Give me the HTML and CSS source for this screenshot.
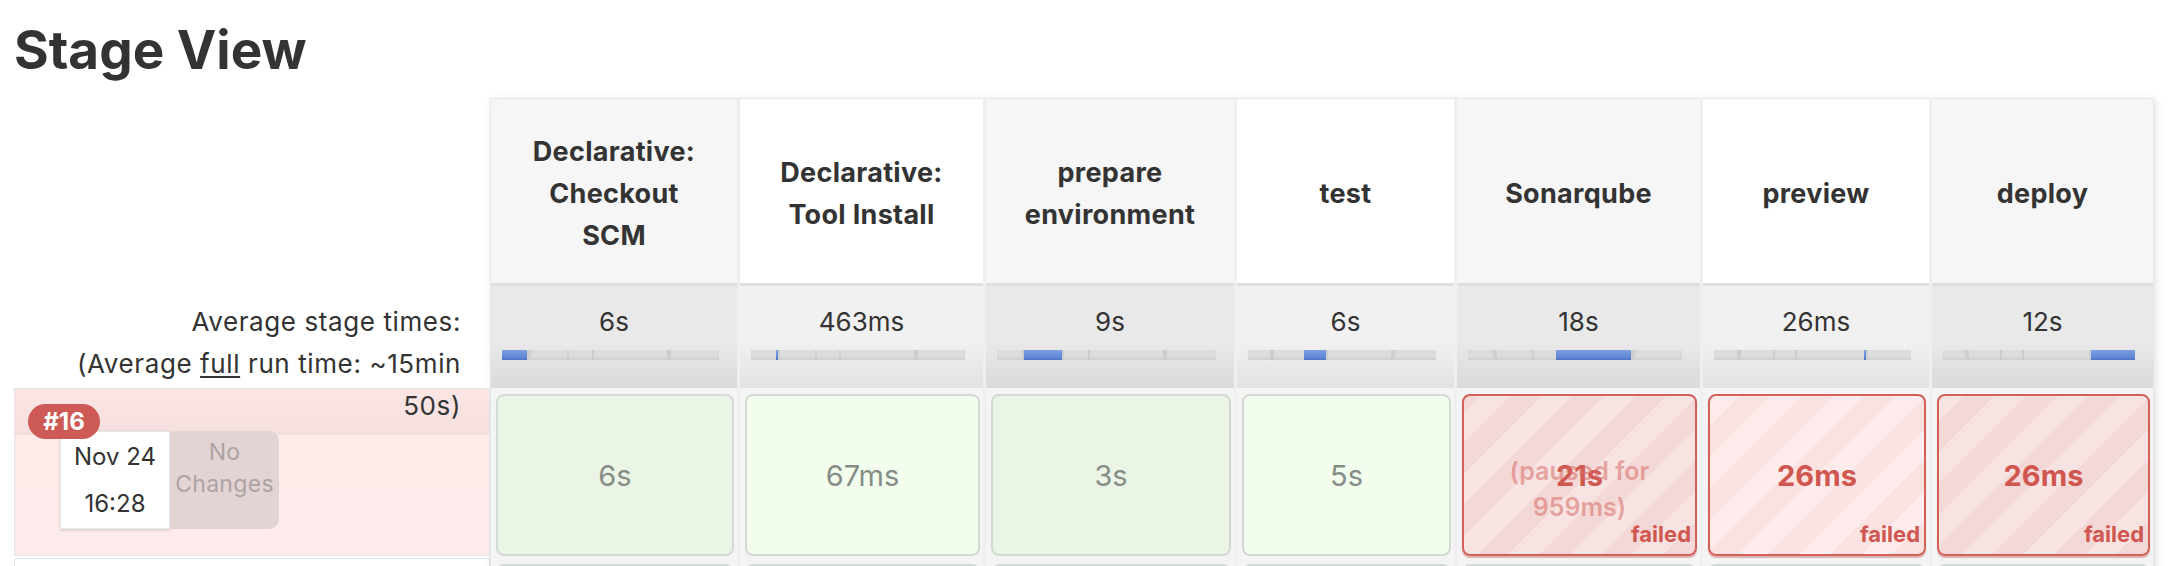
FILE: index.html
```html
<!DOCTYPE html>
<html>
<head>
<meta charset="utf-8">
<title>Stage View</title>
<link rel="stylesheet" href="styles.css">
</head>
<body>
<h2 class="title">Stage View</h2>
<div class="stage-view">
  <div class="labels">
    <div class="label-head"></div>
    <div class="label-avg">Average stage times:<br>(Average <u>full</u> run time: ~15min 50s)</div>
    <div class="build-row failed-row">
      <span class="badge">#16</span>
      <div class="build-meta">
        <div class="date"><div>Nov 24</div><div>16:28</div></div>
        <div class="changes">No Changes</div>
      </div>
    </div>
    <div class="build-row next-row"></div>
  </div>

  <div class="table">
    <div class="col">
      <div class="head">Declarative: Checkout SCM</div>
      <div class="avg"><div class="time">6s</div>
        <div class="bar"><span class="seg on" style="width:11.65%"></span><span class="seg" style="width:0.9%"></span><span class="seg" style="width:17.48%"></span><span class="seg" style="width:11.65%"></span><span class="seg" style="width:34.96%"></span><span class="seg" style="width:0.05%"></span><span class="seg" style="width:23.31%"></span></div>
      </div>
      <div class="cell-wrap"><div class="cell ok">6s</div></div>
      <div class="cell-wrap"><div class="cell ok"></div></div>
    </div>
    <div class="col">
      <div class="head">Declarative: Tool Install</div>
      <div class="avg"><div class="time">463ms</div>
        <div class="bar"><span class="seg" style="width:11.65%"></span><span class="seg on" style="width:0.9%"></span><span class="seg" style="width:17.48%"></span><span class="seg" style="width:11.65%"></span><span class="seg" style="width:34.96%"></span><span class="seg" style="width:0.05%"></span><span class="seg" style="width:23.31%"></span></div>
      </div>
      <div class="cell-wrap"><div class="cell ok">67ms</div></div>
      <div class="cell-wrap"><div class="cell ok"></div></div>
    </div>
    <div class="col">
      <div class="head">prepare environment</div>
      <div class="avg"><div class="time">9s</div>
        <div class="bar"><span class="seg" style="width:11.65%"></span><span class="seg" style="width:0.9%"></span><span class="seg on" style="width:17.48%"></span><span class="seg" style="width:11.65%"></span><span class="seg" style="width:34.96%"></span><span class="seg" style="width:0.05%"></span><span class="seg" style="width:23.31%"></span></div>
      </div>
      <div class="cell-wrap"><div class="cell ok">3s</div></div>
      <div class="cell-wrap"><div class="cell ok"></div></div>
    </div>
    <div class="col">
      <div class="head">test</div>
      <div class="avg"><div class="time">6s</div>
        <div class="bar"><span class="seg" style="width:11.65%"></span><span class="seg" style="width:0.9%"></span><span class="seg" style="width:17.48%"></span><span class="seg on" style="width:11.65%"></span><span class="seg" style="width:34.96%"></span><span class="seg" style="width:0.05%"></span><span class="seg" style="width:23.31%"></span></div>
      </div>
      <div class="cell-wrap"><div class="cell ok">5s</div></div>
      <div class="cell-wrap"><div class="cell ok"></div></div>
    </div>
    <div class="col">
      <div class="head">Sonarqube</div>
      <div class="avg"><div class="time">18s</div>
        <div class="bar"><span class="seg" style="width:11.65%"></span><span class="seg" style="width:0.9%"></span><span class="seg" style="width:17.48%"></span><span class="seg" style="width:11.65%"></span><span class="seg on" style="width:34.96%"></span><span class="seg" style="width:0.05%"></span><span class="seg" style="width:23.31%"></span></div>
      </div>
      <div class="cell-wrap"><div class="cell failed"><span class="dur">21s</span><span class="paused">(paused for 959ms)</span><span class="status">failed</span></div></div>
      <div class="cell-wrap"><div class="cell ok"></div></div>
    </div>
    <div class="col">
      <div class="head">preview</div>
      <div class="avg"><div class="time">26ms</div>
        <div class="bar"><span class="seg" style="width:11.65%"></span><span class="seg" style="width:0.9%"></span><span class="seg" style="width:17.48%"></span><span class="seg" style="width:11.65%"></span><span class="seg" style="width:34.96%"></span><span class="seg on" style="width:0.05%"></span><span class="seg" style="width:23.31%"></span></div>
      </div>
      <div class="cell-wrap"><div class="cell failed"><span class="dur">26ms</span><span class="status">failed</span></div></div>
      <div class="cell-wrap"><div class="cell ok"></div></div>
    </div>
    <div class="col">
      <div class="head">deploy</div>
      <div class="avg"><div class="time">12s</div>
        <div class="bar"><span class="seg" style="width:11.65%"></span><span class="seg" style="width:0.9%"></span><span class="seg" style="width:17.48%"></span><span class="seg" style="width:11.65%"></span><span class="seg" style="width:34.96%"></span><span class="seg" style="width:0.05%"></span><span class="seg on" style="width:23.31%"></span></div>
      </div>
      <div class="cell-wrap"><div class="cell failed"><span class="dur">26ms</span><span class="status">failed</span></div></div>
      <div class="cell-wrap"><div class="cell ok"></div></div>
    </div>
  </div>
</div>
</body>
</html>
```

FILE: styles.css
```css
* { box-sizing: border-box; }
html, body { margin: 0; padding: 0; }
body {
  font-family: Inter, "Noto Sans", "Liberation Sans", sans-serif;
  color: #333;
  background: #fff;
  width: 2182px;
  height: 566px;
  overflow: hidden;
}

.title {
  margin: 0;
  height: 98px;
  padding: 23px 0 0 14px;
  font-size: 53px;
  line-height: 54px;
  font-weight: 700;
  color: #333;
}

.stage-view {
  display: flex;
  align-items: flex-start;
}

/* left label column */
.labels {
  flex: none;
  width: 490px;
  padding-left: 14px;
}
.label-head { height: 185px; }
.label-avg {
  position: relative;
  z-index: 1;
  height: 105px;
  padding: 18px 29px 0 40px;
  text-align: right;
  font-size: 26px;
  letter-spacing: 0.6px;
  line-height: 42px;
  color: #333;
}
.label-avg u { text-decoration-thickness: 2px; text-underline-offset: 3px; }

.build-row {
  border: 1px solid #e4e4e4;
}
.failed-row {
  position: relative;
  height: 168px;
  background: linear-gradient(#fbe6e5 0, #f6e0df 43px, #ead6d5 45px, #fdebea 46px, #fdeaea 100%);
}
.next-row {
  margin-top: 2px;
  height: 40px;
  background: #fff;
}
.badge {
  position: absolute;
  left: 13px;
  top: 15px;
  z-index: 2;
  width: 72px;
  height: 35px;
  border-radius: 18px;
  background: #cd5a54;
  color: #fff;
  font-weight: 700;
  font-size: 24px;
  line-height: 35px;
  text-align: center;
}
.build-meta {
  display: flex;
  margin: 42px 0 0 45px;
}
.date {
  width: 110px;
  height: 98px;
  padding-top: 1px;
  background: #fff;
  border: 1px solid #e6e9ec;
  box-shadow: 0 1px 3px rgba(0,0,0,.18);
  text-align: center;
  font-size: 24px;
  line-height: 47px;
  color: #333;
}
.changes {
  width: 109px;
  height: 98px;
  padding-top: 5px;
  background: #e3d4d4;
  border-radius: 0 10px 10px 0;
  text-align: center;
  font-size: 23px;
  letter-spacing: 0.3px;
  line-height: 32px;
  color: #aca3a3;
}

/* stage table */
.table {
  flex: none;
  display: grid;
  grid-template-columns: 246px 243px 248px 217px 243px 226px 221px;
  column-gap: 3px;
  background: #efefef;
  border: 1px solid #e3e8ec;
  box-shadow: 2px 2px 8px rgba(0,0,0,.12);
}
.col {
  display: flex;
  flex-direction: column;
}
.head {
  height: 184px;
  padding: 6px 32px 0;
  display: flex;
  align-items: center;
  justify-content: center;
  text-align: center;
  font-weight: 700;
  font-size: 27px;
  letter-spacing: 0.3px;
  line-height: 42px;
  color: #333;
  background: #fff;
}
.col:nth-child(odd) .head { background: #f6f6f6; }

.avg {
  height: 105px;
  padding-top: 21px;
  border-top: 3px solid #dfdfdf;
  text-align: center;
  background: linear-gradient(#f1f1f1 55%, #e2e2e2 100%);
}
.col:nth-child(odd) .avg { background: linear-gradient(#e9e9e9 55%, #dadada 100%); }
.time {
  font-size: 26px;
  line-height: 30px;
  color: #333;
}
.bar {
  display: flex;
  height: 10px;
  margin: 13px 18px 0 11px;
  background: #dcdcdc;
  box-shadow: inset 0 -2px 2px rgba(0,0,0,.05);
}
.seg {
  display: block;
  height: 100%;
  border-left: 2px solid #cdcdcd;
}
.seg:first-child { border-left: 0; }
.seg.on {
  border-left: 0;
  min-width: 2px;
  background: linear-gradient(#7d9fe2, #6288d6 70%, #4e74c4);
}

.cell-wrap {
  height: 170px;
  padding: 6px 3px 2px 5px;
  background: #f4f4f4;
}
.cell {
  position: relative;
  height: 100%;
  border: 2px solid #d3d9d3;
  border-radius: 8px;
  display: flex;
  align-items: center;
  justify-content: center;
  font-size: 29px;
  color: #868d86;
}
.cell.ok { background: #f2fded; }
.col:nth-child(odd) .cell.ok { background: #eaf5e6; }

.cell.failed {
  border-color: #d55f59;
  color: #d05650;
  box-shadow: 0 2px 1px rgba(170,60,55,.35);
  background: repeating-linear-gradient(-45deg, #fbe2e0 0, #fbe2e0 22px, #fdeceb 22px, #fdeceb 44px);
}
.col:nth-child(odd) .cell.failed {
  background: repeating-linear-gradient(-45deg, #f4d8d7 0, #f4d8d7 22px, #f6e3e2 22px, #f6e3e2 44px);
}
.dur {
  font-weight: 700;
  font-size: 29px;
}
.paused {
  position: absolute;
  inset: 0;
  display: flex;
  align-items: center;
  justify-content: center;
  padding: 28px 30px 0;
  text-align: center;
  font-size: 25px;
  line-height: 36px;
  font-weight: 600;
  color: rgba(214, 105, 99, .55);
}
.status {
  position: absolute;
  right: 4px;
  bottom: 9px;
  font-weight: 700;
  font-size: 22px;
  line-height: 22px;
}
```
